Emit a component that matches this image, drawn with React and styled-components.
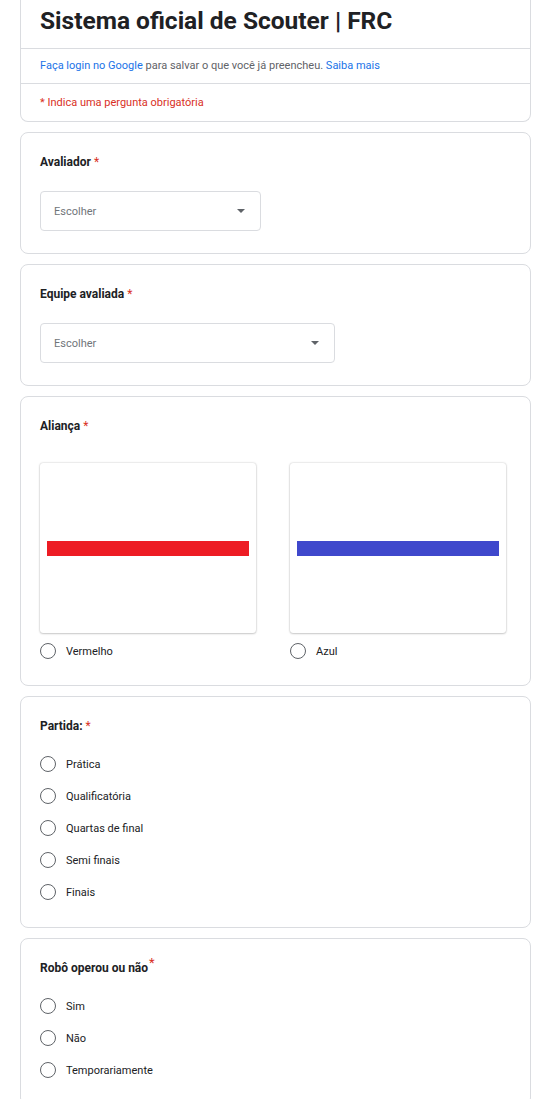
import React from "react";
import styled, { createGlobalStyle } from "styled-components";

const GlobalStyle = createGlobalStyle`
  body {
    margin: 0;
    background: #fff;
    font-family: Roboto, "Liberation Sans", Arial, sans-serif;
    color: #202124;
  }
`;

const Page = styled.div`
  width: 511px;
  margin-left: 20px;
  display: flex;
  flex-direction: column;
  gap: 10px;
  padding-bottom: 40px;
`;

const Card = styled.div`
  background: #fff;
  border: 1px solid #dadce0;
  border-radius: 8px;
  padding: 20px 19px ${(p) => p.$bottom || 19}px;
`;

const HeaderCard = styled.div`
  background: #fff;
  border: 1px solid #dadce0;
  border-top: none;
  border-radius: 0 0 8px 8px;
`;

const FormTitle = styled.h1`
  margin: 0;
  height: 49px;
  box-sizing: border-box;
  padding: 0 19px 7px;
  display: flex;
  align-items: center;
  font-size: 24.5px;
  font-weight: 700;
  border-bottom: 1px solid #dadce0;
`;

const LoginRow = styled.div`
  height: 35px;
  padding: 0 19px 2px;
  box-sizing: border-box;
  display: flex;
  align-items: center;
  font-size: 11px;
  color: #5f6368;
  border-bottom: 1px solid #dadce0;

  a {
    color: #1a73e8;
    text-decoration: none;
  }
`;

const RequiredNote = styled.div`
  height: 37px;
  padding: 0 19px;
  display: flex;
  align-items: center;
  font-size: 11px;
  color: #d93025;
`;

const QTitle = styled.div`
  font-size: 12px;
  font-weight: 700;
  line-height: 18px;
  color: #202124;
`;

const Star = styled.span`
  color: #d93025;
  margin-left: ${(p) => (p.$sup ? "1px" : "3px")};
  font-weight: 400;
  ${(p) => p.$sup && "position: relative; top: -5px; font-size: 13px;"}
`;

const Select = styled.div`
  margin-top: 20px;
  width: ${(p) => p.$width}px;
  height: 40px;
  box-sizing: border-box;
  border: 1px solid #dadce0;
  border-radius: 4px;
  padding: 0 15px 0 13px;
  display: flex;
  align-items: center;
  justify-content: space-between;
  font-size: 11px;
  color: #70757a;
`;

const Caret = styled.span`
  width: 0;
  height: 0;
  border-left: 4px solid transparent;
  border-right: 4px solid transparent;
  border-top: 4px solid #5f6368;
`;

const Options = styled.div`
  margin-top: 13px;
  display: flex;
  flex-direction: column;
`;

const RadioRow = styled.div`
  height: 32px;
  display: flex;
  align-items: center;
  gap: 10px;
  font-size: 11px;
  color: #202124;
`;

const Circle = styled.span`
  width: 16px;
  height: 16px;
  box-sizing: border-box;
  border: 1.5px solid #5f6368;
  border-radius: 50%;
  flex-shrink: 0;
`;

const ImageGrid = styled.div`
  margin-top: 28px;
  display: grid;
  grid-template-columns: 250px 250px;
`;

const ImageOption = styled.div`
  display: flex;
  flex-direction: column;
  gap: 2px;
`;

const ImageBox = styled.div`
  width: 216px;
  height: 170px;
  box-sizing: border-box;
  background: #fff;
  border-radius: 3px;
  box-shadow: 0 0 2px rgba(0, 0, 0, 0.25), 0 1px 2px rgba(0, 0, 0, 0.15);
  display: flex;
  align-items: center;
  padding: 0 7px 0 7px;
`;

const Bar = styled.div`
  width: 100%;
  height: 15px;
  background: ${(p) => p.$color};
`;

function Radio({ label }) {
  return (
    <RadioRow>
      <Circle />
      <span>{label}</span>
    </RadioRow>
  );
}

function SelectQuestion({ title, width }) {
  return (
    <Card $bottom={22}>
      <QTitle>
        {title}
        <Star>*</Star>
      </QTitle>
      <Select $width={width}>
        <span>Escolher</span>
        <Caret />
      </Select>
    </Card>
  );
}

function RadioQuestion({ title, options, sup }) {
  return (
    <Card>
      <QTitle>
        {title}
        <Star $sup={sup}>*</Star>
      </QTitle>
      <Options>
        {options.map((o) => (
          <Radio key={o} label={o} />
        ))}
      </Options>
    </Card>
  );
}

export default function App() {
  return (
    <>
      <GlobalStyle />
      <Page>
        <HeaderCard>
          <FormTitle>Sistema oficial de Scouter | FRC</FormTitle>
          <LoginRow>
            <span>
              <a href="#">Faça login no Google</a> para salvar o que você já
              preencheu. <a href="#">Saiba mais</a>
            </span>
          </LoginRow>
          <RequiredNote>* Indica uma pergunta obrigatória</RequiredNote>
        </HeaderCard>

        <SelectQuestion title="Avaliador" width={221} />
        <SelectQuestion title="Equipe avaliada" width={295} />

        <Card $bottom={18}>
          <QTitle>
            Aliança
            <Star>*</Star>
          </QTitle>
          <ImageGrid>
            <ImageOption>
              <ImageBox>
                <Bar $color="#ed1c24" />
              </ImageBox>
              <Radio label="Vermelho" />
            </ImageOption>
            <ImageOption>
              <ImageBox>
                <Bar $color="#3f48cc" />
              </ImageBox>
              <Radio label="Azul" />
            </ImageOption>
          </ImageGrid>
        </Card>

        <RadioQuestion
          title="Partida:"
          options={[
            "Prática",
            "Qualificatória",
            "Quartas de final",
            "Semi finais",
            "Finais",
          ]}
        />

        <RadioQuestion
          title="Robô operou ou não"
          sup
          options={["Sim", "Não", "Temporariamente"]}
        />
      </Page>
    </>
  );
}
